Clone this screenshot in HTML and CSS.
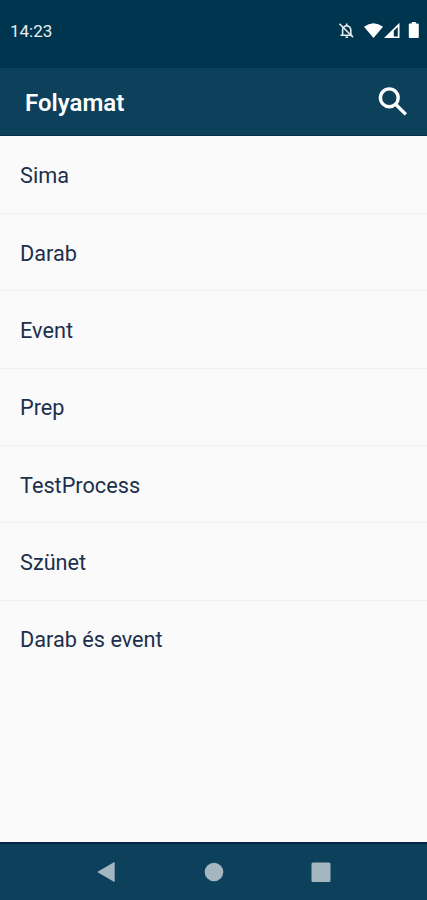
FILE: index.html
```html
<!DOCTYPE html>
<html lang="hu">
<head>
    <meta charset="UTF-8">
    <meta name="viewport" content="width=device-width, initial-scale=1.0">
    <title>Folyamat</title>
    <link rel="stylesheet" href="styles.css">
</head>
<body>
    <div class="status-bar">
        <span class="time">14:23</span>
        <svg class="status-icons" viewBox="0 0 84 24" width="84" height="24">
            <!-- notifications off -->
            <path class="bell" d="M3.500 16.300h11.800M5.600 16v-5q0-3.600 4-4.300Q13.600 7.200 13.800 11v5M9.700 4.500v2.500"/>
            <path class="bell" d="M2.500 4.800l13.500 13.500"/>
            <path d="M8.300 17.600h3a1.500 1.500 0 0 1-3 0z"/>
            <!-- wifi -->
            <path d="M27 7.800Q36.500 0.600 46 7.800L36.500 19z"/>
            <!-- signal -->
            <path fill-rule="evenodd" d="M47 19L62.500 3.800V19zM56.800 11.800V17.400H60.800V8z"/>
            <!-- battery -->
            <path d="M72.800 4.500h2V3h4v1.500h2q1 0 1 1v12.500q0 1-1 1h-8q-1 0-1-1V5.500q0-1 1-1z"/>
        </svg>
    </div>
    <div class="toolbar">
        <h1>Folyamat</h1>
        <svg class="search" viewBox="0 0 32 32" width="32" height="32">
            <circle cx="12.300" cy="11.800" r="8.900"/>
            <path d="M18.600 18.200l10.200 10.200"/>
        </svg>
    </div>
    <ul class="list">
        <li>Sima</li>
        <li>Darab</li>
        <li>Event</li>
        <li>Prep</li>
        <li>TestProcess</li>
        <li>Szünet</li>
        <li>Darab és event</li>
    </ul>
    <div class="nav-bar">
        <svg viewBox="0 0 22 22" width="22" height="22"><path d="M2.200 11L18.900 1.200q.8-.3.800.5v18.600q0 .8-.8.500z"/></svg>
        <svg viewBox="0 0 22 22" width="22" height="22"><circle cx="11" cy="11" r="9.300"/></svg>
        <svg viewBox="0 0 22 22" width="22" height="22"><rect x="1.500" y="1.500" width="19" height="19.500" rx="1.500"/></svg>
    </div>
</body>
</html>
```

FILE: styles.css
```css
* {
    box-sizing: border-box;
}

body {
    font-family: Roboto, sans-serif;
    background-color: #fafafa;
    margin: 0;
    height: 900px;
    display: flex;
    flex-direction: column;
    overflow: hidden;
}

.status-bar {
    height: 68px;
    padding: 0 6px 6px 10px;
    background-color: #003550;
    color: #e8eef2;
    display: flex;
    align-items: center;
    justify-content: space-between;
}

.time {
    font-size: 17px;
    font-weight: 400;
}

.status-icons {
    fill: white;
}

.bell {
    fill: none;
    stroke: #e8eef2;
    stroke-width: 1.6;
}

.toolbar {
    height: 68px;
    padding: 0 18px 0 25px;
    background-color: #0c405b;
    border-bottom: 1px solid #0a3048;
    display: flex;
    align-items: center;
    justify-content: space-between;
}

h1 {
    margin: 0;
    padding-top: 2px;
    font-size: 24px;
    font-weight: 600;
    color: white;
}

.search {
    fill: none;
    stroke: white;
    stroke-width: 3.4;
}

.list {
    flex: 1;
    margin: 0;
    padding: 0.5px 0 0;
    list-style: none;
}

.list li {
    height: 77.4px;
    padding: 2px 20px 0;
    display: flex;
    align-items: center;
    border-bottom: 1px solid #f0f0f0;
    font-size: 21.7px;
    color: #1c2f4c;
}

.list li:last-child {
    padding-top: 0;
    border-bottom: none;
}

.nav-bar {
    height: 58px;
    padding: 0 95px 1px;
    background-color: #0c405b;
    border-top: 2px solid #06244a;
    display: flex;
    align-items: center;
    justify-content: space-between;
}

.nav-bar svg {
    fill: #a4b6c0;
}
```
